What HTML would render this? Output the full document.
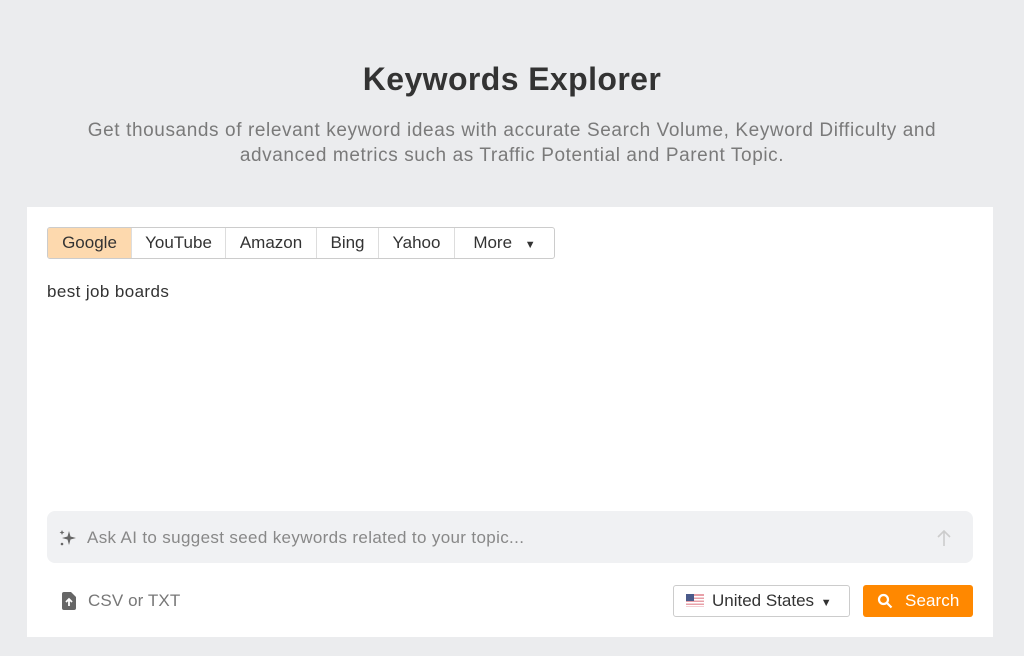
<!DOCTYPE html>
<html><head><style>
body{margin:0;width:1024px;height:656px;background:#ebecee;font-family:"Liberation Sans",sans-serif;position:relative;overflow:hidden}
.a{position:absolute}
h1{position:absolute;top:61px;left:0;width:1024px;text-align:center;margin:0;font-size:32px;font-weight:bold;color:#333;letter-spacing:0.4px}
.sub{top:118px;left:0;width:1024px;text-align:center;font-size:19px;line-height:25px;color:#7a7a7a;letter-spacing:0.6px}
.card{left:27px;top:207px;width:966px;height:430px;background:#fff}
.tabs{left:47px;top:227px;height:32px;display:flex;border:1px solid #ccc;border-radius:3px;overflow:hidden;box-sizing:border-box}
.tabs div{height:30px;line-height:30px;font-size:17px;color:#333;text-align:center;border-right:1px solid #ddd;box-sizing:border-box}
.tabs div:last-child{border-right:none}
</style></head><body>
<h1>Keywords Explorer</h1>
<div class="a sub">Get thousands of relevant keyword ideas with accurate Search Volume, Keyword Difficulty and<br>advanced metrics such as Traffic Potential and Parent Topic.</div>
<div class="a card"></div>
<div class="a tabs">
<div style="width:84px;background:#fdd9ae">Google</div>
<div style="width:94px">YouTube</div>
<div style="width:91px">Amazon</div>
<div style="width:62px">Bing</div>
<div style="width:76px">Yahoo</div>
<div style="width:99px">More <span style="font-size:11px;margin-left:8px">▼</span></div>
</div>
<div class="a" style="left:47px;top:282px;font-size:17px;color:#333;letter-spacing:0.4px">best job boards</div>
<div class="a" style="left:47px;top:511px;width:926px;height:52px;background:#f0f1f3;border-radius:8px"></div>
<svg class="a" style="left:58px;top:528px" width="20" height="20" viewBox="0 0 20 20" fill="#666"><path d="M11 3 L12.5 8.5 L18 10 L12.5 11.5 L11 17 L9.5 11.5 L4 10 L9.5 8.5Z"/><path d="M4 2 L4.7 3.8 L6.5 4.5 L4.7 5.2 L4 7 L3.3 5.2 L1.5 4.5 L3.3 3.8Z"/><circle cx="4" cy="16" r="1.3"/></svg>
<div class="a" style="left:87px;top:528px;font-size:17px;color:#888;letter-spacing:0.35px">Ask AI to suggest seed keywords related to your topic...</div>
<svg class="a" style="left:936px;top:529px" width="16" height="18" viewBox="0 0 16 18" fill="none" stroke="#ccc" stroke-width="1.6"><path d="M8 17V2M2 8l6-6 6 6"/></svg>
<svg class="a" style="left:62px;top:592px" width="14" height="18" viewBox="0 0 14 18"><path d="M0 2a2 2 0 0 1 2-2h7l5 5v11a2 2 0 0 1-2 2H2a2 2 0 0 1-2-2z" fill="#666"/><path d="M7 14V7M4 10l3-3 3 3" stroke="#fff" stroke-width="1.8" fill="none"/></svg>
<div class="a" style="left:88px;top:591px;font-size:17px;color:#777;letter-spacing:0.1px">CSV or TXT</div>
<div class="a" style="left:673px;top:585px;width:177px;height:32px;border:1px solid #ccc;border-radius:3px;box-sizing:border-box"></div>
<svg class="a" style="left:686px;top:594px" width="18" height="13" viewBox="0 0 18 13"><rect width="18" height="13" fill="#e8a0a8"/><rect y="2" width="18" height="1.5" fill="#fff"/><rect y="5" width="18" height="1.5" fill="#fff"/><rect y="8" width="18" height="1.5" fill="#fff"/><rect y="11" width="18" height="1.5" fill="#fff"/><rect width="8" height="7" fill="#4a5a8a"/></svg>
<div class="a" style="left:712px;top:591px;font-size:17px;color:#333">United States <span style="font-size:11px;margin-left:2px">▼</span></div>
<div class="a" style="left:863px;top:585px;width:110px;height:32px;background:#ff8800;border-radius:3px"></div>
<svg class="a" style="left:877px;top:593px" width="16" height="16" viewBox="0 0 16 16" fill="none" stroke="#fff" stroke-width="2.2"><circle cx="6.5" cy="6.5" r="4.5"/><path d="M10 10l4.5 4.5"/></svg>
<div class="a" style="left:905px;top:591px;font-size:17px;color:#fff;letter-spacing:0.1px">Search</div>
</body></html>
